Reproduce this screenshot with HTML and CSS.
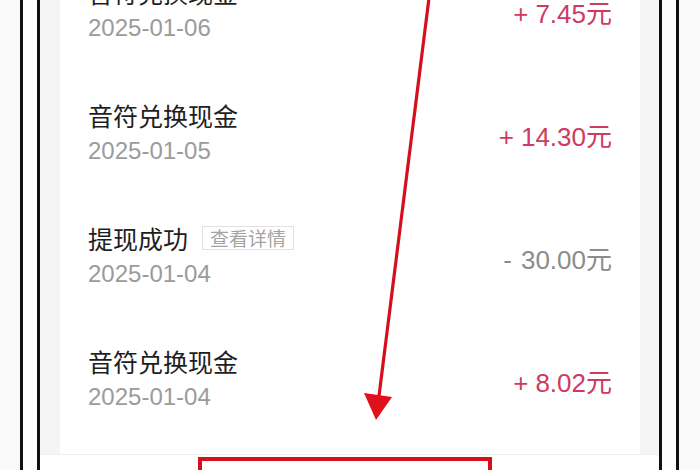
FILE: index.html
```html
<!DOCTYPE html>
<html lang="zh-CN">
<head>
<meta charset="utf-8">
<title>收支明细</title>
<link rel="stylesheet" href="styles.css">
</head>
<body>
<div class="device">
  <div class="gutter"></div>
  <div class="rule"></div>
  <div class="bezel"></div>
  <div class="rule"></div>
  <div class="screen">
    <div class="card">
      <div class="row">
        <div class="info">
          <div class="title">音符兑换现金</div>
          <div class="date">2025-01-06</div>
        </div>
        <div class="amount income"><span class="sign">+</span>7.45元</div>
      </div>
      <div class="row">
        <div class="info">
          <div class="title">音符兑换现金</div>
          <div class="date">2025-01-05</div>
        </div>
        <div class="amount income"><span class="sign">+</span>14.30元</div>
      </div>
      <div class="row">
        <div class="info">
          <div class="title">提现成功<span class="tag">查看详情</span></div>
          <div class="date">2025-01-04</div>
        </div>
        <div class="amount expense"><span class="sign minus">-</span>30.00元</div>
      </div>
      <div class="row">
        <div class="info">
          <div class="title">音符兑换现金</div>
          <div class="date">2025-01-04</div>
        </div>
        <div class="amount income"><span class="sign">+</span>8.02元</div>
      </div>
    </div>
    <div class="tabbar">
      <div class="highlight"></div>
    </div>
  </div>
  <div class="rule"></div>
  <div class="bezel"></div>
  <div class="rule"></div>
  <div class="gutter end"></div>
</div>
<svg class="arrow" width="700" height="470" viewBox="0 0 700 470" aria-hidden="true">
  <line x1="429" y1="-2" x2="379" y2="396" stroke="#d3101c" stroke-width="3.2"/>
  <polygon points="364,393 392,397 376,420" fill="#e0101c"/>
</svg>
</body>
</html>
```

FILE: styles.css
```css
html, body {
  margin: 0;
  padding: 0;
}
body {
  width: 700px;
  height: 470px;
  overflow: hidden;
  position: relative;
  background: #fafafa;
  font-family: "Liberation Sans", "Noto Sans CJK SC", sans-serif;
}
.device {
  display: flex;
  width: 700px;
  height: 470px;
}
.gutter {
  width: 20px;
  flex: none;
  background: #f9f9f9;
}
.gutter.end {
  width: 21px;
}
.rule {
  width: 3px;
  flex: none;
  background: #111;
}
.bezel {
  width: 14px;
  flex: none;
  background: #fdfdfd;
}
.screen {
  width: 619px;
  flex: none;
  display: flex;
  flex-direction: column;
  background: #f5f5f5;
  overflow: hidden;
}
.card {
  margin: -53px 19px 0 20px;
  padding: 0 28px 15px;
  background: #fff;
}
.row {
  height: 123px;
  display: flex;
  align-items: center;
  justify-content: space-between;
}
.info {
  display: flex;
  flex-direction: column;
}
.title {
  display: flex;
  align-items: center;
  font-family: "Noto Sans CJK SC", sans-serif;
  font-size: 25px;
  line-height: 34px;
  color: #1e1e1e;
}
.tag {
  margin-left: 14px;
  padding: 0 7px;
  border: 1px solid #e2e2e2;
  font-size: 19px;
  line-height: 22px;
  color: #a3a3a3;
}
.date {
  padding-top: 5px;
  font-size: 24px;
  line-height: 28px;
  color: #9b9b9b;
}
.amount {
  padding-top: 10px;
  font-size: 26px;
  line-height: 32px;
}
.sign {
  margin-right: 7px;
}
.sign.minus {
  margin-right: 9px;
}
.income {
  color: #cf3a60;
}
.expense {
  color: #8c8c8c;
}
.tabbar {
  flex: 1 1 auto;
  background: #fff;
  border-top: 1px solid #efefef;
  padding-left: 158px;
}
.highlight {
  margin-top: 2px;
  width: 294px;
  height: 40px;
  box-sizing: border-box;
  border: 4px solid #d3101c;
}
.arrow {
  position: absolute;
  left: 0;
  top: 0;
}
```
